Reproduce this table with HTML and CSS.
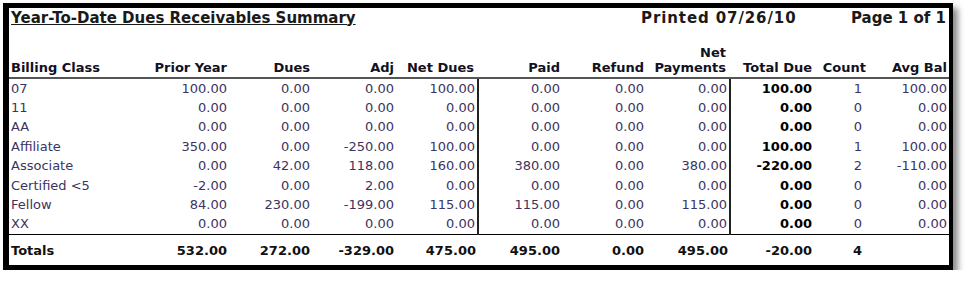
FILE: index.html
```html
<!DOCTYPE html>
<html lang="en">
<head>
    <meta charset="UTF-8">
    <title>Year-To-Date Dues Receivables Summary</title>
    <link rel="stylesheet" href="styles.css">
</head>
<body>
    <div class="report">
        <div class="title-bar">
            <div class="title">Year-To-Date Dues Receivables Summary</div>
            <div class="printed">Printed 07/26/10</div>
            <div class="page">Page 1 of 1</div>
        </div>

        <table class="dues">
            <colgroup>
                <col class="c-class">
                <col class="c-prior">
                <col class="c-dues">
                <col class="c-num">
                <col class="c-net">
                <col class="c-num">
                <col class="c-num">
                <col class="c-num">
                <col class="c-num">
                <col class="c-count">
                <col class="c-avg">
            </colgroup>
            <thead>
                <tr>
                    <th class="left">Billing Class</th>
                    <th>Prior Year</th>
                    <th>Dues</th>
                    <th>Adj</th>
                    <th class="sep">Net Dues</th>
                    <th>Paid</th>
                    <th>Refund</th>
                    <th class="sep">Net<br>Payments</th>
                    <th>Total Due</th>
                    <th class="count">Count</th>
                    <th>Avg Bal</th>
                </tr>
            </thead>
            <tbody id="rows"></tbody>
            <tfoot>
                <tr>
                    <td class="left">Totals</td>
                    <td>532.00</td>
                    <td>272.00</td>
                    <td>-329.00</td>
                    <td>475.00</td>
                    <td>495.00</td>
                    <td>0.00</td>
                    <td>495.00</td>
                    <td>-20.00</td>
                    <td class="count">4</td>
                    <td></td>
                </tr>
            </tfoot>
        </table>
    </div>

    <script>
        const rows = [
            ["07", "100.00", "0.00", "0.00", "100.00", "0.00", "0.00", "0.00", "100.00", "1", "100.00"],
            ["11", "0.00", "0.00", "0.00", "0.00", "0.00", "0.00", "0.00", "0.00", "0", "0.00"],
            ["AA", "0.00", "0.00", "0.00", "0.00", "0.00", "0.00", "0.00", "0.00", "0", "0.00"],
            ["Affiliate", "350.00", "0.00", "-250.00", "100.00", "0.00", "0.00", "0.00", "100.00", "1", "100.00"],
            ["Associate", "0.00", "42.00", "118.00", "160.00", "380.00", "0.00", "380.00", "-220.00", "2", "-110.00"],
            ["Certified <5", "-2.00", "0.00", "2.00", "0.00", "0.00", "0.00", "0.00", "0.00", "0", "0.00"],
            ["Fellow", "84.00", "230.00", "-199.00", "115.00", "115.00", "0.00", "115.00", "0.00", "0", "0.00"],
            ["XX", "0.00", "0.00", "0.00", "0.00", "0.00", "0.00", "0.00", "0.00", "0", "0.00"]
        ];

        // Build the body rows
        const body = document.getElementById("rows");
        rows.forEach(row => {
            const tr = document.createElement("tr");
            row.forEach((value, i) => {
                const td = document.createElement("td");
                td.textContent = value;
                if (i === 0) td.className = "left";
                if (i === 4 || i === 7) td.className = "sep";
                if (i === 8) td.className = "total";
                if (i === 9) td.className = "count";
                tr.appendChild(td);
            });
            body.appendChild(tr);
        });
    </script>
</body>
</html>
```

FILE: styles.css
```css
body {
    margin: 0;
    padding: 3px 0 0 3px;
    background: #fff;
    font-family: "DejaVu Sans", Verdana, sans-serif;
}

.report {
    width: 940px;
    height: 257px;
    border-style: solid;
    border-color: #000;
    border-width: 5px 4px 5px 6px;
    background: #fff;
    box-shadow: 5px 5px 6px rgba(0, 0, 0, 0.45);
}

.title-bar {
    display: flex;
    align-items: center;
    height: 19px;
    padding: 0 3px 0 2px;
    font-size: 15px;
    font-weight: bold;
    color: #1a1a1a;
}

.title {
    text-decoration: underline;
    flex: 1;
}

.printed {
    width: 210px;
    letter-spacing: 0.9px;
}

/* Table */
.dues {
    width: 940px;
    table-layout: fixed;
    border-collapse: collapse;
    font-size: 13px;
}

.c-class { width: 131px; }
.c-prior { width: 89px; }
.c-num { width: 84px; }
.c-dues { width: 83px; }
.c-net { width: 82px; }
.c-count { width: 56px; }
.c-avg { width: 79px; }

.dues th {
    height: 48px;
    vertical-align: bottom;
    text-align: right;
    padding: 0 2px 2px 0;
    font-weight: bold;
    color: #111122;
    line-height: 15px;
    border-bottom: 2px solid #555;
    white-space: nowrap;
}

.dues td {
    height: 19.4px;
    padding: 0 2px 0 0;
    text-align: right;
    color: #3d3360;
    line-height: 14px;
    white-space: nowrap;
}

.dues .left {
    text-align: left;
    padding-left: 2px;
}

.dues td.sep {
    border-right: 2px solid #222;
}

.dues th.sep {
    padding-right: 4px;
}

.dues td.total {
    font-weight: bold;
    color: #000;
}

.dues th.count {
    padding-right: 4px;
}

.dues td.count {
    padding-right: 8px;
}

.dues tbody tr:last-child td {
    border-bottom: 1px solid #000;
}

.dues tfoot td {
    height: 31px;
    font-weight: bold;
    color: #111;
}
```
